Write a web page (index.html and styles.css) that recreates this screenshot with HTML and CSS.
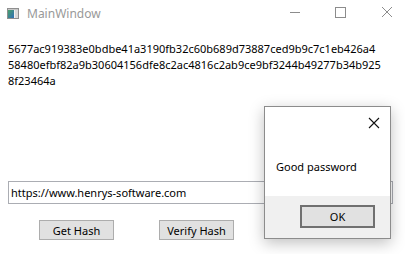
FILE: index.html
```html
<!DOCTYPE html>
<html lang="en">
<head>
    <meta charset="UTF-8">
    <title>MainWindow</title>
    <link rel="stylesheet" href="styles.css">
</head>
<body>
    <div class="window">
        <!-- Title bar -->
        <div class="titlebar">
            <svg class="app-icon" width="12" height="11" viewBox="0 0 12 11">
                <defs>
                    <linearGradient id="iconFill" x1="0" y1="0" x2="1" y2="1">
                        <stop offset="0" stop-color="#4aa06a"/>
                        <stop offset="1" stop-color="#2f6fb8"/>
                    </linearGradient>
                </defs>
                <rect x="0.5" y="0.5" width="11" height="10" fill="#f2f2f2" stroke="#8f8f8f"/>
                <rect x="1" y="2" width="6" height="8" fill="url(#iconFill)"/>
                <rect x="8" y="2" width="3" height="8" fill="#d9d9d9"/>
                <rect x="1" y="1" width="10" height="1" fill="#c8c8c8"/>
            </svg>
            <span class="title">MainWindow</span>
            <div class="caption-buttons">
                <svg class="cap-btn" width="46" height="30" viewBox="0 0 46 30">
                    <line x1="18" y1="12.5" x2="28" y2="12.5" stroke="#8c8c8c"/>
                </svg>
                <svg class="cap-btn" width="46" height="30" viewBox="0 0 46 30">
                    <rect x="17.5" y="7.5" width="10" height="10" fill="none" stroke="#8c8c8c"/>
                </svg>
                <svg class="cap-btn" width="46" height="30" viewBox="0 0 46 30">
                    <path d="M18 7 L28 17 M28 7 L18 17" stroke="#8c8c8c"/>
                </svg>
            </div>
        </div>

        <div class="content">
            <div class="hash">
                <div>5677ac919383e0bdbe41a3190fb32c60b689d73887ced9b9c7c1eb426a4</div>
                <div>58480efbf82a9b30604156dfe8c2ac4816c2ab9ce9bf3244b49277b34b925</div>
                <div>8f23464a</div>
            </div>

            <input class="password" type="text" value="https://www.henrys-software.com">

            <div class="actions">
                <button class="btn">Get Hash</button>
                <button class="btn">Verify Hash</button>
            </div>
        </div>

        <!-- Message box -->
        <div class="msgbox">
            <div class="msg-top">
                <svg class="msg-close" width="12" height="12" viewBox="0 0 12 12">
                    <path d="M1 1 L11 11 M11 1 L1 11" stroke="#111" stroke-width="1.1"/>
                </svg>
                <p class="msg-text">Good password</p>
            </div>
            <div class="msg-bottom">
                <button class="btn btn-ok">OK</button>
            </div>
        </div>
    </div>
</body>
</html>
```

FILE: styles.css
```css
body {
    margin: 0;
    font-family: "Noto Sans", "Open Sans", sans-serif;
    font-size: 11px;
    color: #000;
    background: #fff;
}
.window {
    position: relative;
    width: 405px;
    height: 254px;
    overflow: hidden;
}
.titlebar {
    display: flex;
    align-items: center;
    height: 30px;
}
.app-icon {
    margin: 0 0 0 7px;
    flex: none;
    margin-top: -4px;
}
.title {
    margin-left: 8px;
    color: #999;
    font-size: 12px;
    margin-top: -3px;
}
.caption-buttons {
    display: flex;
    margin-left: auto;
    align-self: flex-start;
    margin-right: -5px;
}
.cap-btn {
    display: block;
}
.content {
    padding: 8px 8px 0 8px;
}
.hash {
    line-height: 16px;
    margin-top: 3px;
}
.password {
    display: block;
    box-sizing: border-box;
    width: 385px;
    height: 23px;
    margin-top: 92px;
    padding: 0 2px;
    border: 1px solid #abadb3;
    font-family: inherit;
    font-size: 11px;
    color: #000;
    outline: none;
}
.actions {
    display: flex;
    gap: 45px;
    margin-top: 16px;
    padding-left: 31px;
}
.btn {
    box-sizing: border-box;
    width: 75px;
    height: 20px;
    padding: 0;
    border: 1px solid #adadad;
    background: #e1e1e1;
    font-family: inherit;
    font-size: 11px;
    color: #000;
}
.msgbox {
    position: absolute;
    left: 264px;
    top: 106px;
    width: 127px;
    height: 133px;
    box-sizing: border-box;
    border: 1px solid #8c8c8c;
    background: #f0f0f0;
    box-shadow: 0 4px 14px rgba(0, 0, 0, 0.25);
    display: flex;
    flex-direction: column;
}
.msg-top {
    position: relative;
    background: #fff;
    height: 89px;
}
.msg-close {
    position: absolute;
    right: 10px;
    top: 10px;
}
.msg-text {
    margin: 0;
    padding: 52px 0 0 11px;
    line-height: 16px;
}
.msg-bottom {
    display: flex;
    justify-content: flex-end;
    padding: 9px 15px 0 0;
}
.btn-ok {
    height: 23px;
    border: 2px solid #707070;
}
```
